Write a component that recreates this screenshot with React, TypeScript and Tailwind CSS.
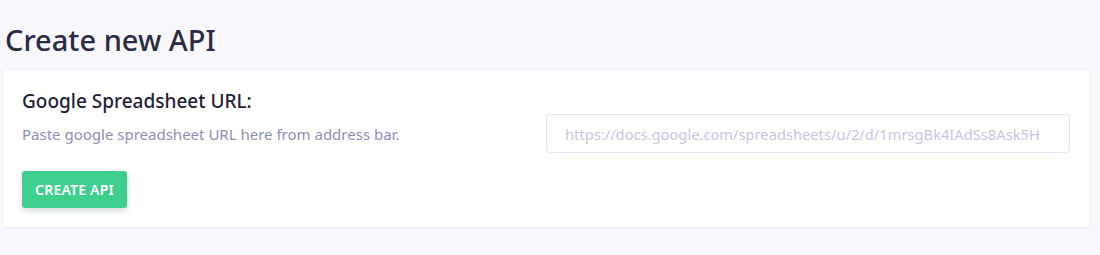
import React from 'react';

// Create API page: title + card with URL field and action button

const font = "font-['Noto_Sans','Open_Sans',sans-serif]";

export default function App() {
  return (
    <div className={`min-h-[255px] bg-[#f7f7fc] px-[3px] pt-[22px] ${font}`}>
      <h1 className="pl-[2px] text-[29px] leading-[36px] font-medium text-[#2a2b45]">
        Create new API
      </h1>

      <div className="mt-[12px] mr-[8px] rounded-[4px] bg-white px-[19px] pt-[18px] pb-[19px] shadow-[0_1px_3px_rgba(40,40,90,0.06)]">
        <div className="grid grid-cols-2">
          <div className="flex flex-col">
            <label className="text-[19px] leading-[26px] font-medium text-[#1f2038]">
              Google Spreadsheet URL:
            </label>
            <p className="mt-[9px] text-[15px] leading-[22px] text-[#8c8fba]">
              Paste google spreadsheet URL here from address bar.
            </p>
            <div className="mt-[26px]">
              <button className="h-[37px] w-[105px] rounded-[3px] bg-[#3ecf8e] text-[14px] font-semibold tracking-[0.2px] text-white uppercase shadow-[0_3px_6px_rgba(30,60,50,0.18)]">
                Create API
              </button>
            </div>
          </div>

          <div className="pt-[26px]">
            <input
              type="text"
              placeholder="https://docs.google.com/spreadsheets/u/2/d/1mrsgBk4IAdSs8Ask5H"
              className="h-[39px] w-full rounded-[4px] border border-[#dde9f5] bg-white px-[18px] text-[14.7px] text-[#2a2b45] outline-none placeholder:text-[#c5c7e0]"
            />
          </div>
        </div>
      </div>
    </div>
  );
}
